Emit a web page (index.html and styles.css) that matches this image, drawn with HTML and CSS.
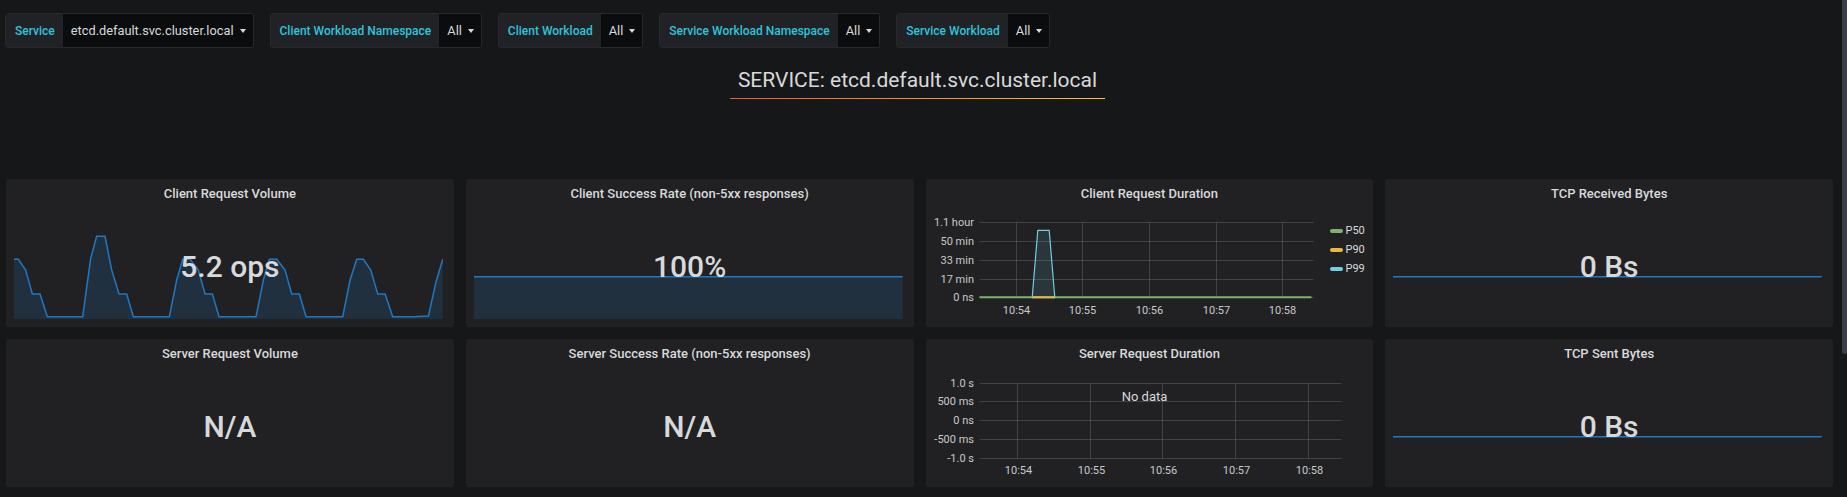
FILE: index.html
```html
<!DOCTYPE html>
<html>
<head>
<meta charset="utf-8">
<title>Istio Service Dashboard</title>
<link rel="stylesheet" href="styles.css">
</head>
<body>
<div class="scrollbar"></div>

<div class="vars">
  <div class="var"><span class="var-label">Service</span><span class="var-value">etcd.default.svc.cluster.local<span class="caret"></span></span></div>
  <div class="var"><span class="var-label">Client Workload Namespace</span><span class="var-value">All<span class="caret"></span></span></div>
  <div class="var"><span class="var-label">Client Workload</span><span class="var-value">All<span class="caret"></span></span></div>
  <div class="var"><span class="var-label">Service Workload Namespace</span><span class="var-value">All<span class="caret"></span></span></div>
  <div class="var"><span class="var-label">Service Workload</span><span class="var-value">All<span class="caret"></span></span></div>
</div>

<div class="title-row">
  <h2 class="dash-title">SERVICE: etcd.default.svc.cluster.local</h2>
</div>

<div class="grid">
  <!-- Row 1 -->
  <div class="panel">
    <div class="panel-title">Client Request Volume</div>
    <div class="panel-body stat">
      <svg class="spark" viewBox="42 180 1286 267" preserveAspectRatio="none">
        <path class="spark-fill" d="M42,447 L42,268 L55,268 L77,300 L97,372 L120,372 L142,440 L248,440 L272,265 L290,199 L315,199 L335,300 L357,372 L380,372 L400,440 L508,440 L530,330 L548,268 L570,268 L595,300 L615,372 L637,372 L657,440 L768,440 L790,330 L808,268 L830,268 L855,300 L875,372 L898,372 L918,440 L1028,440 L1050,330 L1070,268 L1090,268 L1112,300 L1133,372 L1155,372 L1178,440 L1240,440 L1285,438 L1308,335 L1328,268 L1328,447 Z"/>
        <path class="spark-line" d="M42,268 L55,268 L77,300 L97,372 L120,372 L142,440 L248,440 L272,265 L290,199 L315,199 L335,300 L357,372 L380,372 L400,440 L508,440 L530,330 L548,268 L570,268 L595,300 L615,372 L637,372 L657,440 L768,440 L790,330 L808,268 L830,268 L855,300 L875,372 L898,372 L918,440 L1028,440 L1050,330 L1070,268 L1090,268 L1112,300 L1133,372 L1155,372 L1178,440 L1240,440 L1285,438 L1308,335 L1328,268"/>
      </svg>
      <span class="stat-value">5.2 ops</span>
    </div>
  </div>

  <div class="panel">
    <div class="panel-title">Client Success Rate (non-5xx responses)</div>
    <div class="panel-body stat">
      <svg class="spark" viewBox="42 180 1286 267" preserveAspectRatio="none">
        <path class="spark-fill" d="M42,447 L42,320 L1328,320 L1328,447 Z"/>
        <path class="spark-line" d="M42,320 L1328,320"/>
      </svg>
      <span class="stat-value">100%</span>
    </div>
  </div>

  <div class="panel">
    <div class="panel-title">Client Request Duration</div>
    <div class="panel-body graph">
      <svg class="graph-svg" width="395" height="120" viewBox="0 28 395 120">
        <g class="grid-lines">
          <line x1="53.5" y1="43.5" x2="387.5" y2="43.5"/>
          <line x1="53.5" y1="62.5" x2="387.5" y2="62.5"/>
          <line x1="53.5" y1="81.5" x2="387.5" y2="81.5"/>
          <line x1="53.5" y1="100.5" x2="387.5" y2="100.5"/>
          <line x1="53.5" y1="118.5" x2="387.5" y2="118.5"/>
          <line x1="90.5" y1="43.5" x2="90.5" y2="118.5"/>
          <line x1="156.5" y1="43.5" x2="156.5" y2="118.5"/>
          <line x1="223.5" y1="43.5" x2="223.5" y2="118.5"/>
          <line x1="290.5" y1="43.5" x2="290.5" y2="118.5"/>
          <line x1="356.5" y1="43.5" x2="356.5" y2="118.5"/>
        </g>
        <g class="y-labels">
          <text x="48" y="43.5">1.1 hour</text>
          <text x="48" y="62">50 min</text>
          <text x="48" y="81">33 min</text>
          <text x="48" y="100">17 min</text>
          <text x="48" y="118.5">0 ns</text>
        </g>
        <g class="x-labels">
          <text x="90.5" y="131">10:54</text>
          <text x="156.5" y="131">10:55</text>
          <text x="223.5" y="131">10:56</text>
          <text x="290.5" y="131">10:57</text>
          <text x="356.5" y="131">10:58</text>
        </g>
        <line class="s-p50" x1="53.5" y1="118.3" x2="385.5" y2="118.3"/>
        <line class="s-p90" x1="106" y1="118.3" x2="129" y2="118.3"/>
        <polygon class="s-p99-fill" points="106.2,118.5 111.8,51.3 123.2,51.3 128.8,118.5"/>
        <polyline class="s-p99" points="106.2,118.5 111.8,51.3 123.2,51.3 128.8,118.5"/>
      </svg>
      <div class="legend">
        <div class="legend-item"><span class="swatch p50"></span>P50</div>
        <div class="legend-item"><span class="swatch p90"></span>P90</div>
        <div class="legend-item"><span class="swatch p99"></span>P99</div>
      </div>
    </div>
  </div>

  <div class="panel">
    <div class="panel-title">TCP Received Bytes</div>
    <div class="panel-body stat">
      <svg class="spark" viewBox="42 180 1286 267" preserveAspectRatio="none">
        <path class="spark-line" d="M42,320 L1328,320"/>
      </svg>
      <span class="stat-value">0 Bs</span>
    </div>
  </div>

  <!-- Row 2 -->
  <div class="panel">
    <div class="panel-title">Server Request Volume</div>
    <div class="panel-body stat">
      <span class="stat-value">N/A</span>
    </div>
  </div>

  <div class="panel">
    <div class="panel-title">Server Success Rate (non-5xx responses)</div>
    <div class="panel-body stat">
      <span class="stat-value">N/A</span>
    </div>
  </div>

  <div class="panel">
    <div class="panel-title">Server Request Duration</div>
    <div class="panel-body graph">
      <svg class="graph-svg" width="440" height="120" viewBox="0 28 440 120">
        <g class="grid-lines">
          <line x1="53.5" y1="44.5" x2="415.5" y2="44.5"/>
          <line x1="53.5" y1="62.5" x2="415.5" y2="62.5"/>
          <line x1="53.5" y1="81.5" x2="415.5" y2="81.5"/>
          <line x1="53.5" y1="100.5" x2="415.5" y2="100.5"/>
          <line x1="53.5" y1="119.5" x2="415.5" y2="119.5"/>
          <line x1="91.5" y1="44.5" x2="91.5" y2="119.5"/>
          <line x1="164.5" y1="44.5" x2="164.5" y2="119.5"/>
          <line x1="236.5" y1="44.5" x2="236.5" y2="119.5"/>
          <line x1="309.5" y1="44.5" x2="309.5" y2="119.5"/>
          <line x1="382.5" y1="44.5" x2="382.5" y2="119.5"/>
        </g>
        <g class="y-labels">
          <text x="48" y="44.3">1.0 s</text>
          <text x="48" y="62.3">500 ms</text>
          <text x="48" y="81">0 ns</text>
          <text x="48" y="100">-500 ms</text>
          <text x="48" y="119">-1.0 s</text>
        </g>
        <g class="x-labels">
          <text x="92.5" y="131">10:54</text>
          <text x="165.5" y="131">10:55</text>
          <text x="237.5" y="131">10:56</text>
          <text x="310.5" y="131">10:57</text>
          <text x="383.5" y="131">10:58</text>
        </g>
        <text class="no-data" x="218.5" y="57.7">No data</text>
      </svg>
    </div>
  </div>

  <div class="panel">
    <div class="panel-title">TCP Sent Bytes</div>
    <div class="panel-body stat">
      <svg class="spark" viewBox="42 180 1286 267" preserveAspectRatio="none">
        <path class="spark-line" d="M42,320 L1328,320"/>
      </svg>
      <span class="stat-value">0 Bs</span>
    </div>
  </div>
</div>
</body>
</html>
```

FILE: styles.css
```css
html, body {
  margin: 0;
  padding: 0;
}

body {
  background: #161719;
  color: #d8d9da;
  font-family: Roboto, "Liberation Sans", sans-serif;
  width: 1847px;
  height: 497px;
  overflow: hidden;
}

.scrollbar {
  position: fixed;
  top: 0;
  right: 0;
  width: 5px;
  height: 354px;
  background: #3b3d48;
  border-radius: 0 0 3px 3px;
}

/* Template variables */
.vars {
  display: flex;
  gap: 16px;
  padding: 13px 0 0 5px;
  height: 35px;
}

.var {
  display: flex;
  height: 35px;
  border: 1px solid #27292d;
  border-radius: 3px;
  overflow: hidden;
  box-sizing: border-box;
}

.var-label {
  display: flex;
  align-items: center;
  padding: 0 8px 0 9px;
  background: #202226;
  color: #2ec4dc;
  font-size: 12px;
  font-weight: 500;
}

.var-value {
  display: flex;
  align-items: center;
  padding: 0 7px 0 8px;
  background: #0b0c0e;
  color: #d8d9da;
  font-size: 12.8px;
}

.caret {
  width: 0;
  height: 0;
  margin-left: 6px;
  border-left: 3px solid transparent;
  border-right: 3px solid transparent;
  border-top: 4px solid #d8d9da;
}

/* Dashboard text title */
.title-row {
  margin-top: 20px;
  text-align: center;
  padding-right: 12px;
}

.dash-title {
  display: inline-block;
  margin: 0;
  padding: 0 8px 6px;
  font-size: 21px;
  font-weight: 400;
  line-height: 24px;
  color: #d8d9da;
  border-bottom: 1px solid #f05a28;
  border-image: linear-gradient(90deg, #f05a28, #fbca0a) 1;
}

/* Panel grid */
.grid {
  display: grid;
  grid-template-columns: repeat(4, 1fr);
  grid-auto-rows: 148px;
  gap: 12px;
  margin: 80px 14px 0 6px;
}

.panel {
  background: #212124;
  border-radius: 3px;
  display: flex;
  flex-direction: column;
  overflow: hidden;
}

.panel-title {
  height: 28px;
  line-height: 29px;
  text-align: center;
  font-size: 13px;
  font-weight: 500;
  color: #d8d9da;
  flex: none;
}

.panel-body {
  flex: 1;
  position: relative;
}

.stat {
  display: flex;
  align-items: center;
  justify-content: center;
}

.stat-value {
  position: relative;
  z-index: 1;
  font-size: 30px;
  font-weight: 500;
  line-height: 30px;
  color: #d8d9da;
}

.spark {
  position: absolute;
  left: 8px;
  right: 11px;
  bottom: 8px;
  width: calc(100% - 19px);
  height: 89px;
  z-index: 0;
}

.spark-fill {
  fill: rgba(31, 118, 189, 0.18);
  stroke: none;
}

.spark-line {
  fill: none;
  stroke: rgb(31, 120, 193);
  stroke-width: 1.5px;
  vector-effect: non-scaling-stroke;
}

/* Graph panels */
.graph {
  display: flex;
  align-items: flex-start;
}

.graph-svg {
  flex: none;
  display: block;
  font-family: Roboto, "Liberation Sans", sans-serif;
}

.grid-lines line {
  stroke: rgba(255, 255, 255, 0.15);
  stroke-width: 1;
}

.y-labels text {
  font-size: 11px;
  fill: #c8c9ca;
  text-anchor: end;
  dominant-baseline: central;
}

.x-labels text {
  font-size: 11px;
  fill: #c8c9ca;
  text-anchor: middle;
  dominant-baseline: central;
}

.no-data {
  font-size: 13px;
  fill: #d8d9da;
  text-anchor: middle;
  dominant-baseline: central;
}

.s-p50 {
  stroke: #7eb26d;
  stroke-width: 2;
}

.s-p90 {
  stroke: #eab839;
  stroke-width: 2;
}

.s-p99-fill {
  fill: rgba(110, 208, 224, 0.12);
}

.s-p99 {
  fill: none;
  stroke: #6ed0e0;
  stroke-width: 1.2;
}

.legend {
  display: flex;
  flex-direction: column;
  padding: 14px 0 0 9px;
}

.legend-item {
  display: flex;
  align-items: center;
  height: 19px;
  font-size: 11px;
  color: #d8d9da;
}

.swatch {
  width: 13px;
  height: 4px;
  border-radius: 2px;
  margin-right: 3px;
}

.swatch.p50 { background: #7eb26d; }
.swatch.p90 { background: #eab839; }
.swatch.p99 { background: #6ed0e0; }
```
